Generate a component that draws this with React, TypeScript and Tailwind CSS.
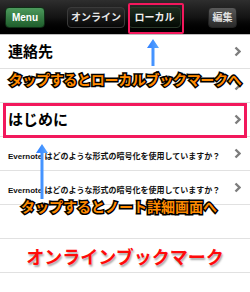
import React from 'react';

const font = "font-['Liberation_Sans','Noto_Sans_CJK_JP',sans-serif]";

function Chevron() {
  return (
    <svg width="7" height="11" viewBox="0 0 7 11" className="shrink-0">
      <polyline points="1.5,1.5 5.5,5.5 1.5,9.5" fill="none" stroke="#7d7d7d" strokeWidth="2.4" />
    </svg>
  );
}

function UpArrow({ height }: { height: number }) {
  const pts = `6,0 12,9 7.5,9 7.5,${height} 4.5,${height} 4.5,9 0,9`;
  return (
    <svg width="12" height={height} viewBox={`0 0 12 ${height}`}>
      <defs>
        <linearGradient id={`ab${height}`} x1="0" y1="0" x2="1" y2="0">
          <stop offset="0" stopColor="#2f7fff" />
          <stop offset="1" stopColor="#5aa8ff" />
        </linearGradient>
      </defs>
      <polygon points={pts} fill={`url(#ab${height})`} />
    </svg>
  );
}

function Row({ children, chevron = true }: { children?: React.ReactNode; chevron?: boolean }) {
  return (
    <div className="h-[34px] flex items-center justify-between pl-[8px] pr-[9px] border-b border-[#e1e1e1]">
      <div className="min-w-0">{children}</div>
      {chevron && <Chevron />}
    </div>
  );
}

export default function App() {
  return (
    <div className={`relative w-[250px] h-[292px] overflow-hidden bg-white ${font}`}>
      {/* top bar */}
      <div className="h-[35px] flex items-center px-[5px] bg-gradient-to-b from-[#2e2e2e] via-[#141414] to-[#000] border-b border-[#bdbdbd]">
        <div className="w-[40px] h-[21px] rounded-[4px] border border-[#0f2e16] bg-gradient-to-b from-[#4c9a5c] to-[#1f5e2c] flex items-center justify-center text-white text-[10px] font-bold">
          Menu
        </div>
        <div className="ml-[22px] flex items-center gap-[3px]">
          <div className="w-[58px] h-[21px] rounded-[4px] border border-[#3a3a3a] bg-gradient-to-b from-[#2c2c2c] to-[#080808] flex items-center justify-center text-[#e8e8e8] text-[10px] font-bold">
            オンライン
          </div>
          <div className="w-[53px] h-[21px] rounded-[4px] border border-[#2a3a2a] bg-gradient-to-b from-[#1d2e1f] to-[#050a05] flex items-center justify-center text-[#f0f0f0] text-[10px] font-bold">
            ローカル
          </div>
        </div>
        <div className="ml-auto mr-[8px] w-[29px] h-[21px] rounded-[4px] border border-[#222] bg-gradient-to-b from-[#5a5a5a] to-[#2a2a2a] flex items-center justify-center text-[#e0e0e0] text-[10px] font-bold">
          編集
        </div>
      </div>

      {/* list */}
      <Row>
        <span className="text-[15px] font-bold text-black">連絡先</span>
      </Row>
      <Row />
      <Row>
        <span className="text-[15px] font-bold text-black">はじめに</span>
      </Row>
      <Row>
        <span className="text-[8px] font-bold text-[#111] whitespace-nowrap">Evernote はどのような形式の暗号化を使用していますか？</span>
      </Row>
      <Row>
        <span className="text-[8px] font-bold text-[#111] whitespace-nowrap">Evernote はどのような形式の暗号化を使用していますか？</span>
      </Row>
      <Row chevron={false} />
      <Row chevron={false} />
      <Row chevron={false} />

      {/* annotations */}
      <div className="absolute left-[128px] top-[3px] w-[56px] h-[31px] border-[2px] border-[#f2185c] rounded-[2px]" />
      <div className="absolute left-[3px] top-[103px] w-[244px] h-[35px] border-[3px] border-[#f2185c]" />

      <div className="absolute left-[147px] top-[39px]">
        <UpArrow height={27} />
      </div>
      <div className="absolute left-[36px] top-[144px]">
        <UpArrow height={55} />
      </div>

      <div className="absolute left-0 top-[72px] w-[250px] text-center text-[14px] leading-[16px] font-bold tracking-[-0.3px] text-[#ff8a00] [-webkit-text-stroke:3px_#000] [paint-order:stroke_fill] whitespace-nowrap">
        タップするとローカルブックマークへ
      </div>
      <div className="absolute left-[21px] top-[199px] text-[14px] leading-[16px] font-bold text-[#ff8a00] [-webkit-text-stroke:3px_#000] [paint-order:stroke_fill] whitespace-nowrap">
        タップするとノート詳細画面へ
      </div>
      <div className="absolute left-0 top-[248px] w-[250px] text-center text-[18px] leading-[20px] font-bold text-[#ff0a0a] [-webkit-text-stroke:3px_#fff] [paint-order:stroke_fill] [text-shadow:1px_2px_2px_rgba(0,0,0,0.35)] whitespace-nowrap">
        オンラインブックマーク
      </div>
    </div>
  );
}
